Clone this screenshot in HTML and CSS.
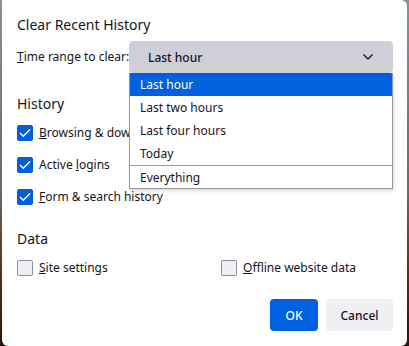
FILE: index.html
```html
<!DOCTYPE html>
<html lang="en">
<head>
  <meta charset="UTF-8">
  <title>Clear Recent History</title>
  <link rel="stylesheet" href="styles.css">
</head>
<body>
  <div class="dialog">
    <h1>Clear Recent History</h1>

    <div class="range-row">
      <span class="range-label"><u>T</u>ime range to clear:</span>
      <div class="select-wrap">
        <div class="select-btn">
          <span>Last hour</span>
          <svg width="12" height="8" viewBox="0 0 12 8"><path d="M1.5 1.5 L6 6 L10.5 1.5" fill="none" stroke="#15141a" stroke-width="1.3"/></svg>
        </div>
        <ul class="popup">
          <li class="sel">Last hour</li>
          <li>Last two hours</li>
          <li>Last four hours</li>
          <li>Today</li>
          <li class="sep">Everything</li>
        </ul>
      </div>
    </div>

    <h2>History</h2>
    <div class="checks">
      <label class="check"><span class="box on"><svg width="12" height="10" viewBox="0 0 12 10"><path d="M1 5 L4.3 8.3 L11 1.5" fill="none" stroke="#fff" stroke-width="1.4"/></svg></span><span><u>B</u>rowsing &amp; download history</span></label>
      <label class="check"><span class="box on"><svg width="12" height="10" viewBox="0 0 12 10"><path d="M1 5 L4.3 8.3 L11 1.5" fill="none" stroke="#fff" stroke-width="1.4"/></svg></span><span>Active <u>l</u>ogins</span></label>
      <label class="check"><span class="box on"><svg width="12" height="10" viewBox="0 0 12 10"><path d="M1 5 L4.3 8.3 L11 1.5" fill="none" stroke="#fff" stroke-width="1.4"/></svg></span><span><u>F</u>orm &amp; search history</span></label>
    </div>

    <h2 class="data-head">Data</h2>
    <div class="data-row">
      <label class="check"><span class="box"></span><span><u>S</u>ite settings</span></label>
      <label class="check"><span class="box"></span><span><u>O</u>ffline website data</span></label>
    </div>

    <div class="buttons">
      <button class="btn primary">OK</button>
      <button class="btn">Cancel</button>
    </div>
  </div>
</body>
</html>
```

FILE: styles.css
```css
* {
  margin: 0;
  padding: 0;
  box-sizing: border-box;
}
body {
  width: 409px;
  height: 346px;
  overflow: hidden;
  background: linear-gradient(180deg, #8a8f99 0%, #6c6a60 55%, #5a2e12 80%, #2a1408 100%);
  font-family: 'Noto Sans', 'Open Sans', sans-serif;
  font-size: 12px;
  color: #15141a;
  padding-left: 2px;
}
.dialog {
  background: #fff;
  width: 405px;
  height: 346px;
  border-radius: 0 6px 6px 6px;
  padding: 15px 14px 0 15px;
}
h1 {
  font-size: 14px;
  font-weight: normal;
  line-height: 20px;
}
.range-row {
  display: flex;
  align-items: center;
  margin-top: 6px;
}
.range-label {
  flex: none;
  width: 112px;
  line-height: 20px;
  white-space: nowrap;
}
.select-wrap {
  position: relative;
  flex: 1;
}
.select-btn {
  height: 32px;
  background: #cfcfd8;
  border-radius: 4px;
  display: flex;
  align-items: center;
  justify-content: space-between;
  padding: 0 19px 0 19px;
  font-weight: 500;
}
.popup {
  position: absolute;
  left: 0;
  right: 0;
  top: 32px;
  list-style: none;
  background: #fff;
  border: 1px solid #9a9a9a;
  border-top: none;
  box-shadow: 1px 2px 3px rgba(0,0,0,0.15);
  z-index: 2;
}
.popup li {
  height: 23px;
  line-height: 23px;
  padding-left: 10px;
}
.popup li.sel {
  background: #0060df;
  color: #fff;
}
.popup li.sep {
  border-top: 1px solid #9a9a9a;
}
h2 {
  font-size: 14px;
  font-weight: normal;
  line-height: 20px;
  margin-top: 21px;
}
.checks {
  display: flex;
  flex-direction: column;
  gap: 15px;
  margin-top: 10px;
}
.check {
  display: flex;
  align-items: center;
  gap: 6px;
  height: 17px;
  white-space: nowrap;
}
.box {
  flex: none;
  width: 16px;
  height: 16px;
  border-radius: 2px;
  border: 1px solid #8f8f9d;
  background: #f0f0f4;
  display: flex;
  align-items: center;
  justify-content: center;
}
.box.on {
  background: #0061e0;
  border-color: #0061e0;
}
.data-head {
  margin-top: 24px;
}
.data-row {
  display: grid;
  grid-template-columns: 204px 1fr;
  margin-top: 10px;
}
.buttons {
  display: flex;
  justify-content: flex-end;
  gap: 8px;
  margin-top: 23px;
}
.btn {
  height: 32px;
  border: none;
  border-radius: 4px;
  background: #f0f0f4;
  color: #15141a;
  font-family: inherit;
  font-size: 12px;
  font-weight: 500;
  width: 67px;
}
.btn.primary {
  background: #0061e0;
  color: #fff;
  width: 48px;
}
```
